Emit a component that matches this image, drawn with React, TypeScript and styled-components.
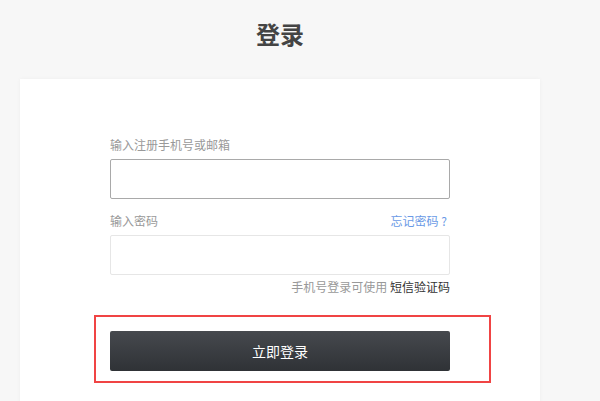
import styled, { createGlobalStyle } from "styled-components";

const GlobalStyle = createGlobalStyle`
  html, body {
    margin: 0;
    padding: 0;
    background: #f7f7f7;
    font-family: "Noto Sans CJK SC", "Noto Sans", "Liberation Sans", sans-serif;
  }
  * { box-sizing: border-box; }
`;

const Page = styled.main`
  width: 520px;
  margin-left: 20px;
  padding-top: 18px;
`;

const Title = styled.h1`
  margin: 0 0 29px;
  font-size: 24px;
  line-height: 32px;
  font-weight: 700;
  color: #444;
  text-align: center;
`;

const Card = styled.section`
  background: #fff;
  box-shadow: 0 0 4px rgba(0, 0, 0, 0.04);
  padding: 58px 90px 40px;
`;

const Form = styled.form`
  display: flex;
  flex-direction: column;
`;

const LabelRow = styled.div`
  display: flex;
  justify-content: space-between;
  align-items: center;
  height: 16px;
  margin-bottom: 6px;
`;

const Label = styled.label`
  font-size: 12px;
  line-height: 16px;
  color: #999;
`;

const Forgot = styled.a`
  font-size: 12px;
  line-height: 16px;
  color: #6a9ae6;
  text-decoration: none;
  cursor: pointer;
  margin-right: 3px;
`;

const Input = styled.input<{ $active?: boolean }>`
  width: 100%;
  height: 40px;
  border: 1px solid ${(p) => (p.$active ? "#a9a9a9" : "#e6e6e6")};
  border-radius: 2px;
  padding: 0 10px;
  font-size: 14px;
  outline: none;
  background: #fff;
  margin-bottom: ${(p) => (p.$active ? "14px" : "4px")};
`;

const Hint = styled.p`
  margin: 0;
  text-align: right;
  font-size: 12px;
  line-height: 16px;
  color: #999;

  b {
    font-weight: 400;
    color: #333;
    cursor: pointer;
  }
`;

const SubmitWrap = styled.div`
  position: relative;
  margin-top: 36px;
`;

const Highlight = styled.span`
  position: absolute;
  top: -16px;
  left: -16px;
  right: -41px;
  bottom: -12px;
  border: 2px solid #f04444;
  pointer-events: none;
`;

const Submit = styled.button`
  display: block;
  width: 100%;
  height: 40px;
  border: none;
  border-radius: 2px;
  background: linear-gradient(to bottom, #46494e, #2f3236);
  color: #fff;
  font-family: inherit;
  font-size: 14px;
  cursor: pointer;
`;

export default function App() {
  return (
    <>
      <GlobalStyle />
      <Page>
        <Title>登录</Title>
        <Card>
          <Form onSubmit={(e) => e.preventDefault()}>
            <LabelRow>
              <Label>输入注册手机号或邮箱</Label>
            </LabelRow>
            <Input $active type="text" />
            <LabelRow>
              <Label>输入密码</Label>
              <Forgot>忘记密码 ?</Forgot>
            </LabelRow>
            <Input type="password" />
            <Hint>
              手机号登录可使用 <b>短信验证码</b>
            </Hint>
            <SubmitWrap>
              <Submit type="submit">立即登录</Submit>
              <Highlight />
            </SubmitWrap>
          </Form>
        </Card>
      </Page>
    </>
  );
}
